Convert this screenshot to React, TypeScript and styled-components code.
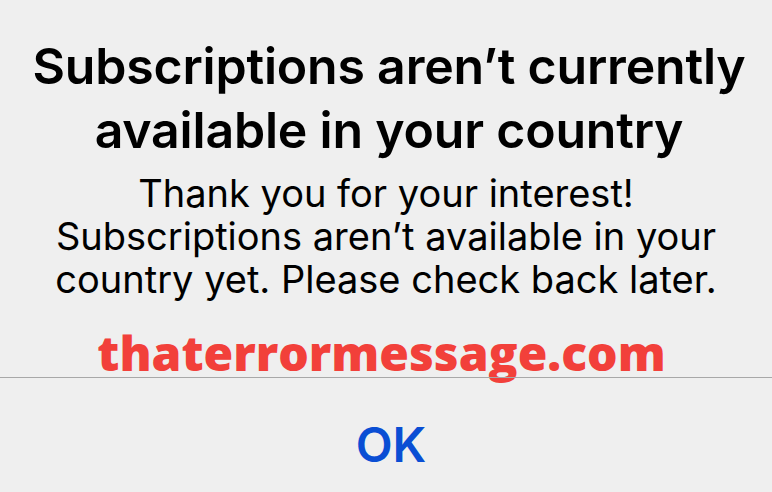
import React from 'react';
import styled, { createGlobalStyle } from 'styled-components';

const GlobalStyle = createGlobalStyle`
  html, body {
    margin: 0;
    padding: 0;
    background: #efefef;
  }
  body {
    font-family: Inter, "Noto Sans", "Liberation Sans", sans-serif;
    -webkit-font-smoothing: antialiased;
  }
`;

const Alert = styled.div`
  width: 772px;
  height: 492px;
  display: flex;
  flex-direction: column;
  background: #efefef;
  overflow: hidden;
`;

const Body = styled.div`
  display: flex;
  flex-direction: column;
  align-items: center;
  padding: 34px 0 0 6px;
  height: 377px;
  box-sizing: border-box;
`;

const Title = styled.h1`
  margin: 0;
  font-size: 50px;
  font-weight: 600;
  line-height: 64px;
  letter-spacing: -0.2px;
  color: #000;
  text-align: center;
`;

const Message = styled.p`
  margin: 10px 0 0 -6px;
  font-size: 38px;
  font-weight: 400;
  line-height: 43px;
  color: #000;
  text-align: center;
`;

const Watermark = styled.div`
  margin: 28px 0 0 -15px;
  font-family: "Open Sans", Lato, sans-serif;
  font-weight: 800;
  font-size: 48px;
  line-height: 48px;
  color: #f2403a;
`;

const Divider = styled.hr`
  margin: 0;
  border: none;
  height: 1px;
  background: #a8a8a8;
`;

const ActionButton = styled.button`
  flex: 1;
  border: none;
  background: transparent;
  font-family: Inter, "Noto Sans", sans-serif;
  font-size: 48px;
  font-weight: 600;
  color: #0a4ed4;
  padding: 18px 0 0 10px;
  display: flex;
  align-items: center;
  justify-content: center;
`;

export default function App() {
  return (
    <Alert>
      <GlobalStyle />
      <Body>
        <Title>
          Subscriptions aren’t currently
          <br />
          available in your country
        </Title>
        <Message>
          Thank you for your interest!
          <br />
          Subscriptions aren’t available in your
          <br />
          country yet. Please check back later.
        </Message>
        <Watermark>thaterrormessage.com</Watermark>
      </Body>
      <Divider />
      <ActionButton>OK</ActionButton>
    </Alert>
  );
}
